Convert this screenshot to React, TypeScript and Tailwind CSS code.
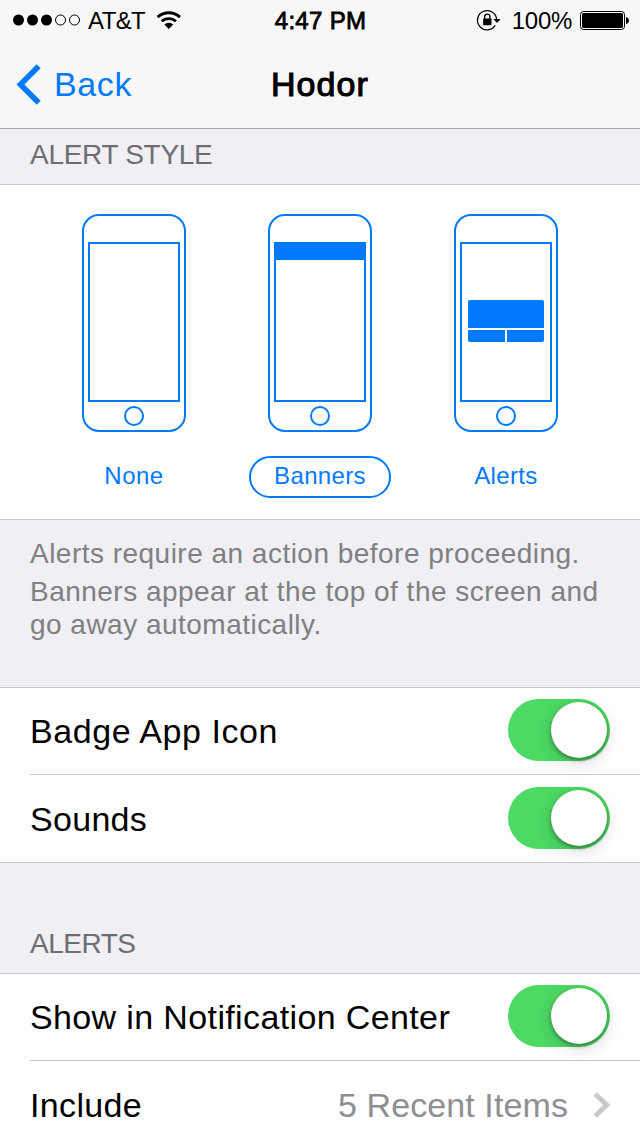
import type { ReactNode } from "react";

function StatusBar() {
  return (
    <div className="grid h-10 grid-cols-[1fr_auto_1fr] items-center pl-[12px] pr-[11px] text-[24px] leading-[42px]">
      <div className="flex items-center">
        <svg width="69" height="12" viewBox="0 0 69 12" className="mb-[2px]">
          <circle cx="6.5" cy="6" r="5.5" />
          <circle cx="20.5" cy="6" r="5.5" />
          <circle cx="34.5" cy="6" r="5.5" />
          <circle cx="48.5" cy="6" r="5" fill="none" stroke="#000" />
          <circle cx="62.5" cy="6" r="5" fill="none" stroke="#000" />
        </svg>
        <span className="ml-[7px] whitespace-nowrap tracking-[-0.6px]">AT&amp;T</span>
        <svg width="26" height="20" viewBox="0 0 26 20" className="ml-[11px]">
          <path d="M1.6 6.1a16.6 16.6 0 0 1 22.4 0" fill="none" stroke="#000" strokeWidth="3" />
          <path d="M5.7 10.3a10.5 10.5 0 0 1 14.2 0" fill="none" stroke="#000" strokeWidth="2.8" />
          <path d="M8.3 13.4a6.6 6.6 0 0 1 9 0L12.8 18z" />
        </svg>
      </div>
      <span className="whitespace-nowrap tracking-[0.3px] [-webkit-text-stroke:0.8px_#000]">4:47 PM</span>
      <div className="flex items-center justify-end">
        <svg width="26" height="24" viewBox="0 0 26 24" className="mb-[2px]">
          <path d="M20.6 10.8A9.6 9.6 0 1 0 19.2 17.4" fill="none" stroke="#000" strokeWidth="1.3" />
          <path d="M17.3 11.1h7.3l-3.6 4z" />
          <rect x="7.1" y="10.6" width="8.4" height="6.7" rx="0.7" />
          <path d="M8.7 11.2V8.8a2.6 2.6 0 0 1 5.2 0V11.2" fill="none" stroke="#000" strokeWidth="1.3" />
        </svg>
        <span className="ml-[10px] whitespace-nowrap tracking-[-0.3px]">100%</span>
        <svg width="49" height="20" viewBox="0 0 49 20" className="mb-[2px] ml-[8px]">
          <rect x="0.5" y="1.5" width="44" height="18" rx="3" fill="none" stroke="#000" />
          <rect x="2" y="3" width="41" height="15" rx="1.6" />
          <path d="M46 7c3.9 0.8 3.9 6.2 0 7z" />
        </svg>
      </div>
    </div>
  );
}

function NavBar() {
  return (
    <div className="grid h-[88px] grid-cols-[1fr_auto_1fr] items-center px-[16px] text-[34px] leading-[88px]">
      <div className="flex items-center text-[#007aff]">
        <svg width="26" height="42" viewBox="0 0 26 42" fill="#007aff">
          <path d="M0.5 21.5 20.7 1.2l4 4L8.4 21.5l16.3 16.2-4 4z" />
        </svg>
        <span className="ml-[12px] tracking-[0.6px]">Back</span>
      </div>
      <span className="tracking-[1.1px] [-webkit-text-stroke:1.1px_#000]">Hodor</span>
      <span />
    </div>
  );
}

function AlertStyle({ label, track, selected, children }: { label: string; track: string; selected?: boolean; children?: ReactNode }) {
  return (
    <div className="flex w-[186px] flex-col items-center">
      <svg width="104" height="218" viewBox="0 0 104 218" fill="none" stroke="#007aff" strokeWidth="2">
        <rect x="1" y="1" width="102" height="216" rx="16" />
        <rect x="7" y="29" width="90" height="158" />
        <circle cx="52" cy="202" r="9" />
        <g fill="#007aff" stroke="none">{children}</g>
      </svg>
      <div
        className={
          selected
            ? "mt-6 flex h-[42px] w-[142px] items-center justify-center rounded-full border-2 border-[#007aff]"
            : "mt-6 flex h-[42px] w-[142px] items-center justify-center"
        }
      >
        <span className={`pb-[2px] text-[24px] leading-[38px] text-[#007aff] ${track}`}>{label}</span>
      </div>
    </div>
  );
}

function Toggle() {
  return (
    <button type="button" className="mb-[2px] flex h-[62px] w-[102px] items-center justify-end rounded-full bg-[#4cd964] pr-[3px]">
      <span className="size-14 rounded-full bg-white shadow-[0_2px_4px_rgba(0,0,0,0.36),0_5px_18px_rgba(0,0,0,0.14)]" />
    </button>
  );
}

function Row({ label, track, last, children }: { label: string; track: string; last?: boolean; children: ReactNode }) {
  return (
    <div
      className={
        last
          ? "ml-[30px] flex h-[88px] shrink-0 items-center justify-between pr-[30px]"
          : "ml-[30px] flex h-[87px] shrink-0 items-center justify-between border-b border-[#c8c7cc] pr-[30px]"
      }
    >
      <span className={`whitespace-nowrap text-[34px] leading-[86px] ${track}`}>{label}</span>
      {children}
    </div>
  );
}

export default function App() {
  return (
    <div className="flex h-[1136px] w-[640px] flex-col overflow-hidden bg-[#efeff4] font-['Liberation_Sans',Arial,sans-serif] text-black">
      <header className="h-[129px] shrink-0 border-b border-[#a7a7ab] bg-[#f7f7f7]">
        <StatusBar />
        <NavBar />
      </header>

      <h2 className="h-[55px] shrink-0 pl-[30px] text-[28px] leading-[51px] tracking-[-0.3px] text-[#6d6d72]">ALERT STYLE</h2>

      <section className="flex h-[336px] shrink-0 justify-center border-y border-[#c8c7cc] bg-white pt-[29px]">
        <AlertStyle label="None" track="tracking-[0.5px]" />
        <AlertStyle label="Banners" track="tracking-[0.35px]" selected>
          <rect x="6" y="28" width="92" height="18" />
        </AlertStyle>
        <AlertStyle label="Alerts" track="tracking-[0.35px]">
          <path d="M14 114V88a2 2 0 0 1 2-2h72a2 2 0 0 1 2 2v26z" />
          <path d="M14 116h37v12H16a2 2 0 0 1-2-2z" />
          <path d="M53 116h37v10a2 2 0 0 1-2 2H53z" />
        </AlertStyle>
      </section>

      <div className="h-[167px] shrink-0 pl-[30px] pt-[15px] text-[28px] leading-[38px] tracking-[0.48px] whitespace-nowrap text-[#808080]">
        <p>Alerts require an action before proceeding.</p>
        <p>Banners appear at the top of the screen and</p>
        <p className="leading-[28px]">go away automatically.</p>
      </div>

      <section className="h-[176px] shrink-0 border-y border-[#c8c7cc] bg-white">
        <Row label="Badge App Icon" track="tracking-[0.57px]">
          <Toggle />
        </Row>
        <Row label="Sounds" track="tracking-[0.3px]" last>
          <Toggle />
        </Row>
      </section>

      <h2 className="h-[110px] shrink-0 pl-[30px] pt-[55px] text-[28px] leading-[51px] tracking-[-0.5px] text-[#6d6d72]">ALERTS</h2>

      <section className="shrink-0 border-t border-[#c8c7cc] bg-white">
        <Row label="Show in Notification Center" track="tracking-[0.37px]">
          <Toggle />
        </Row>
        <Row label="Include" track="tracking-[0.35px]" last>
          <div className="flex items-center">
            <span className="text-[34px] leading-[86px] tracking-[0.1px] whitespace-nowrap text-[#8e8e93]">5 Recent Items</span>
            <svg width="17" height="26" viewBox="0 0 17 26" className="ml-[25px]">
              <path d="M2.2 2 13.8 13 2.2 24" fill="none" stroke="#c7c7cc" strokeWidth="4.8" />
            </svg>
          </div>
        </Row>
      </section>
    </div>
  );
}
